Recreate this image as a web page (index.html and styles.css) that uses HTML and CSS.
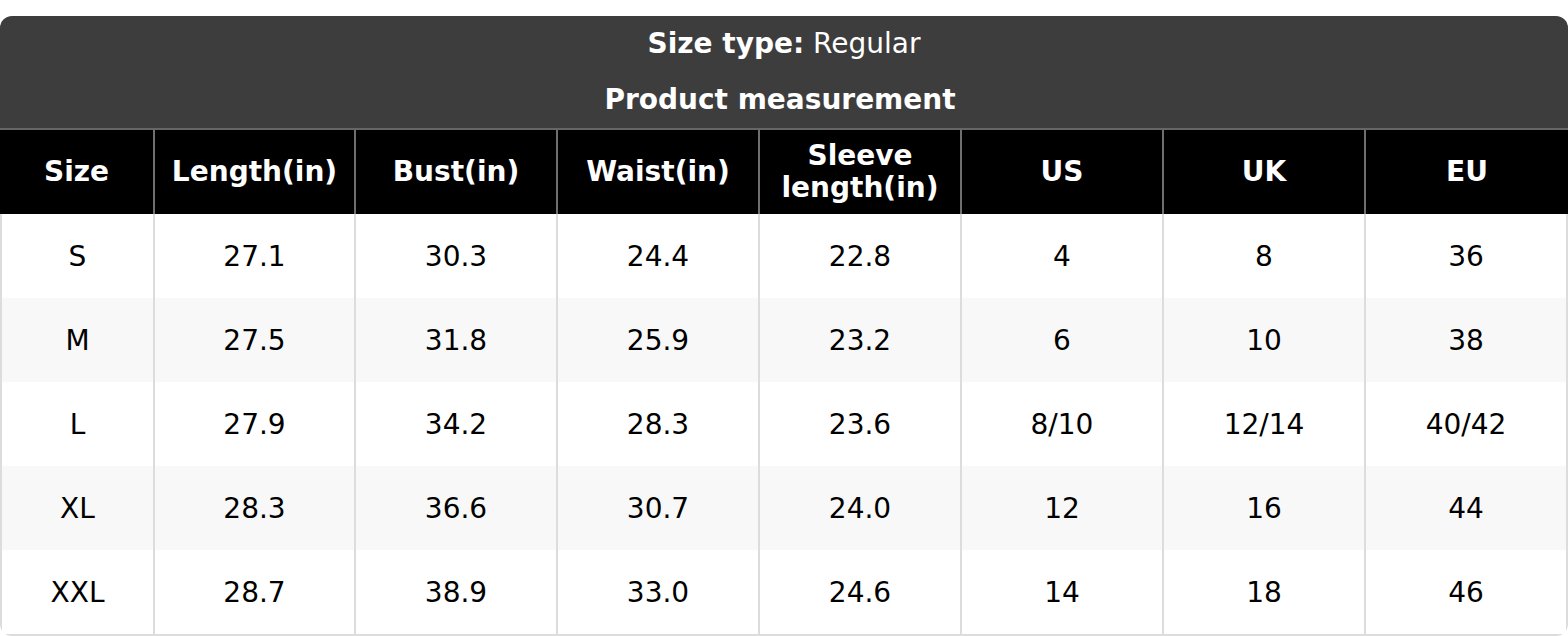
FILE: index.html
```html
<!DOCTYPE html>
<html lang="en">
<head>
<meta charset="utf-8">
<title>Size chart</title>
<link rel="stylesheet" href="styles.css">
</head>
<body>
<div class="chart">
  <div class="title">
    <div class="title-line"><strong>Size type:</strong> Regular</div>
    <div class="title-line title-sub"><strong>Product measurement</strong></div>
  </div>
  <table class="sizes">
    <colgroup>
      <col class="c-size">
      <col class="c-len">
      <col class="c-std"><col class="c-std"><col class="c-std"><col class="c-std"><col class="c-std">
      <col class="c-last">
    </colgroup>
    <thead>
      <tr>
        <th>Size</th><th>Length(in)</th><th>Bust(in)</th><th>Waist(in)</th><th>Sleeve length(in)</th><th>US</th><th>UK</th><th>EU</th>
      </tr>
    </thead>
    <tbody>
      <tr><td>S</td><td>27.1</td><td>30.3</td><td>24.4</td><td>22.8</td><td>4</td><td>8</td><td>36</td></tr>
      <tr><td>M</td><td>27.5</td><td>31.8</td><td>25.9</td><td>23.2</td><td>6</td><td>10</td><td>38</td></tr>
      <tr><td>L</td><td>27.9</td><td>34.2</td><td>28.3</td><td>23.6</td><td>8/10</td><td>12/14</td><td>40/42</td></tr>
      <tr><td>XL</td><td>28.3</td><td>36.6</td><td>30.7</td><td>24.0</td><td>12</td><td>16</td><td>44</td></tr>
      <tr><td>XXL</td><td>28.7</td><td>38.9</td><td>33.0</td><td>24.6</td><td>14</td><td>18</td><td>46</td></tr>
    </tbody>
  </table>
</div>
</body>
</html>
```
FILE: styles.css
```css
html, body {
  margin: 0;
  padding: 0;
  background: #ffffff;
}
body {
  padding-top: 16px;
  font-family: "DejaVu Sans", "Liberation Sans", sans-serif;
  font-size: 28px;
  color: #000;
}
.chart {
  width: 1568px;
  border-radius: 12px;
  overflow: hidden;
  background: #fff;
}
.title {
  background: #3d3d3d;
  color: #fff;
  text-align: center;
  border-bottom: 2px solid #666;
}
.title-line {
  height: 56px;
  line-height: 56px;
}
.title-sub {
  padding-right: 8px;
}
.sizes {
  width: 1568px;
  table-layout: fixed;
  border-collapse: separate;
  border-spacing: 0;
}
.c-size { width: 153px; }
.c-len { width: 201px; }
.c-std { width: 202px; }
.c-last { width: 204px; }
.sizes th,
.sizes td {
  text-align: center;
  vertical-align: middle;
  padding: 0 8px;
  box-sizing: border-box;
}
.sizes th {
  background: #000;
  color: #fff;
  font-weight: bold;
  height: 84px;
  line-height: 32px;
  border-left: 2px solid #6f6f6f;
}
.sizes th:first-child { border-left: none; }
.sizes td {
  height: 84px;
  border-left: 2px solid #dcdcdc;
  color: #000;
}
.sizes td:first-child { border-left: 2px solid #dcdcdc; }
.sizes td:last-child { border-right: 2px solid #dcdcdc; }
.sizes tbody tr:nth-child(even) td { background: #f8f8f8; }
.sizes tbody tr:last-child td { border-bottom: 2px solid #dcdcdc; height: 86px; }
```
